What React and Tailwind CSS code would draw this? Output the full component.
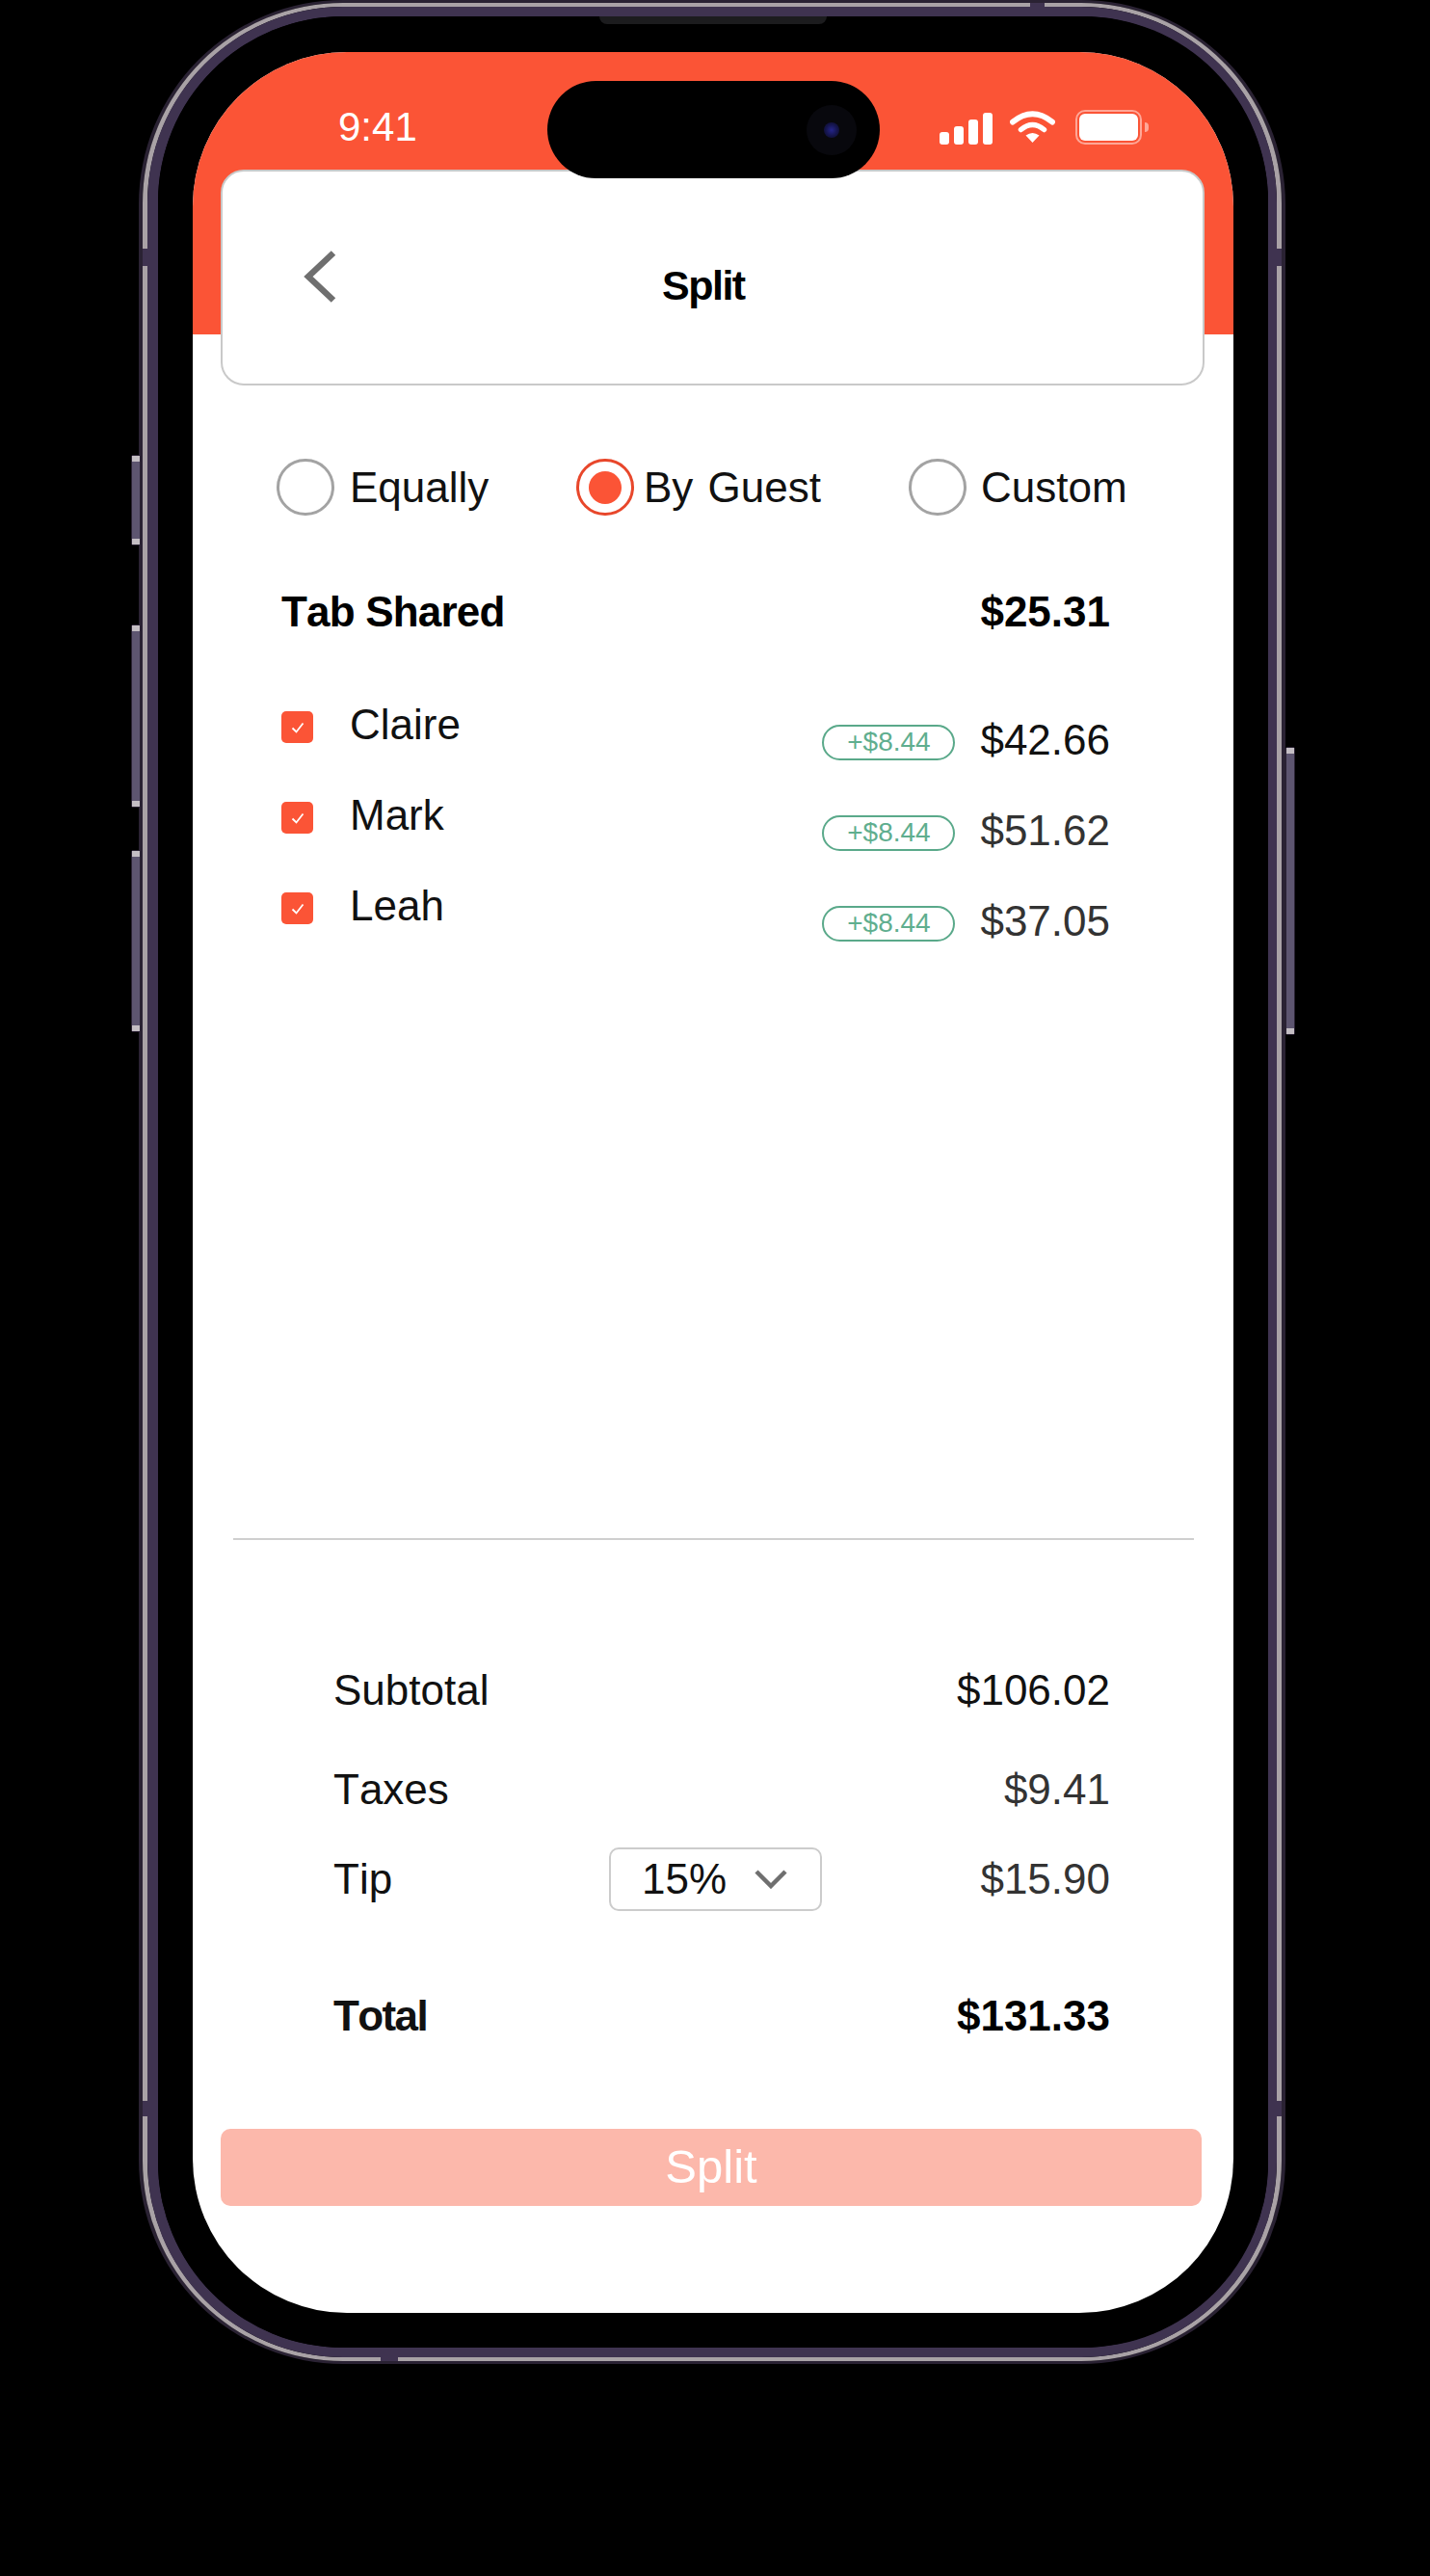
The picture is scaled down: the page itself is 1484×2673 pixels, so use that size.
const guests = [
  { name: "Claire", amount: "$42.66", color: "text-[#111111]" },
  { name: "Mark", amount: "$51.62", color: "text-[#333333]" },
  { name: "Leah", amount: "$37.05", color: "text-[#333333]" },
];

function Signal() {
  return (
    <svg width="55" height="33" viewBox="0 0 55 33" className="mt-[3px]">
      <rect x="0" y="20" width="10" height="13" rx="3" fill="#fff" />
      <rect x="15" y="14" width="10" height="19" rx="3" fill="#fff" />
      <rect x="30" y="7" width="10" height="26" rx="3" fill="#fff" />
      <rect x="45" y="0" width="10" height="33" rx="3" fill="#fff" />
    </svg>
  );
}

function Wifi() {
  return (
    <svg width="47" height="33" viewBox="0 0 47 33" className="mt-[1px] ml-[18px]" fill="none">
      <path d="M3 11.5 Q23.5 -5 44 11.5" stroke="#fff" strokeWidth="6" strokeLinecap="round" />
      <path d="M11.5 19.5 Q23.5 9.5 35.5 19.5" stroke="#fff" strokeWidth="5.5" strokeLinecap="round" />
      <path d="M16.5 25.5 Q23.5 20.5 30.5 25.5 L23.5 33 Z" fill="#fff" />
    </svg>
  );
}

function Battery() {
  return (
    <div className="ml-[21px] flex items-center gap-[3px]">
      <div className="flex h-[36px] w-[69px] rounded-[10px] border-[2.5px] border-[#ffa797] p-[2px]">
        <div className="flex-1 rounded-[6px] bg-white" />
      </div>
      <div className="h-[10px] w-[4px] rounded-r-full bg-[#ffa797]" />
    </div>
  );
}

function Radio({ label, active, width, gap }) {
  return (
    <div className={["flex shrink-0 items-center", width, gap].join(" ")}>
      <div
        className={[
          "flex h-[59px] w-[60px] shrink-0 items-center justify-center rounded-full border-[3px]",
          active ? "border-[#e8472b]" : "border-[#a3a3a3]",
        ].join(" ")}
      >
        {active && <div className="h-[34px] w-[34px] rounded-full bg-[#fb5436]" />}
      </div>
      <span className="leading-[50px] [word-spacing:3px]">{label}</span>
    </div>
  );
}

function GuestRow({ guest }) {
  return (
    <div className="flex h-[94px] justify-between">
      <div className="flex h-[50px] items-center">
        <div className="mt-[5px] flex h-[33px] w-[33px] items-center justify-center rounded-[5px] bg-[#fb5436]">
          <svg width="18" height="18" viewBox="0 0 18 18" fill="none">
            <path d="M3.5 9.5 L7.5 13.5 L14.5 4.5" stroke="#fff" strokeWidth="1.8" />
          </svg>
        </div>
        <span className="ml-[38px] leading-[50px] text-[#111111]">{guest.name}</span>
      </div>
      <div className="mt-[16px] flex h-[50px] items-center">
        <div className="mt-[4px] flex h-[37px] w-[138px] items-center justify-center rounded-full border-[2.5px] border-[#5aa98a] text-[28px] text-[#5fae8f]">
          +$8.44
        </div>
        <span className={["ml-[26px] leading-[50px]", guest.color].join(" ")}>{guest.amount}</span>
      </div>
    </div>
  );
}

function SummaryRow({ label, value, bold, valueColor = "text-[#111111]", className = "", children }) {
  return (
    <div
      className={[
        "flex h-[50px] items-center leading-[50px]",
        bold ? "font-bold" : "",
        className,
      ].join(" ")}
    >
      <span className={["w-[286px]", bold ? "tracking-[-1.6px]" : ""].join(" ")}>{label}</span>
      {children}
      <span className={["ml-auto", valueColor].join(" ")}>{value}</span>
    </div>
  );
}

function SideButton({ className }) {
  return (
    <div
      className={[
        "absolute flex w-[10px] flex-col justify-between rounded-[2px] border border-[#2a2233] bg-[#5d5570]",
        className,
      ].join(" ")}
    >
      <div className="h-[6px] bg-[#c4bec4]" />
      <div className="h-[6px] bg-[#c4bec4]" />
    </div>
  );
}

export default function App() {
  return (
    <div className="h-[2673px] w-full bg-black pl-[144px] font-['Liberation_Sans',sans-serif] text-[44px] text-[#111111] [font-kerning:none]">
      <div className="relative h-[2453px] w-[1190px]">
        <SideButton className="top-[472px] -left-[8px] h-[94px]" />
        <SideButton className="top-[648px] -left-[8px] h-[190px]" />
        <SideButton className="top-[882px] -left-[8px] h-[189px]" />
        <SideButton className="top-[775px] -right-[10px] h-[299px]" />

        {/* outer edge, highlight, purple band */}
        <div className="h-full rounded-[212px] border-x-[4px] border-y-[3px] border-[#2a2233]">
          <div className="h-full rounded-[208px] border-x-[5px] border-y-[4px] border-[#a9a2a6]">
            <div className="h-full rounded-[203px] border-y-[10px] border-r-[9px] border-l-[11px] border-[#3f3350]">
              <div className="relative h-full rounded-[192px] bg-black px-[36px] pt-[37px] pb-[36px]">
                <div className="absolute top-0 left-[458px] h-[8px] w-[236px] rounded-b-[8px] bg-[#1c1c1e]" />

                <div className="flex h-full flex-col overflow-hidden rounded-[160px] bg-white">
                  <div className="flex h-[293px] shrink-0 items-start bg-[#fb5436] pt-[54px] pr-[88px] pl-[151px] text-white">
                    <span className="text-[42px] leading-[48px]">9:41</span>
                    <div className="mt-[6px] ml-auto flex items-start">
                      <Signal />
                      <Wifi />
                      <Battery />
                    </div>
                  </div>

                  <div className="relative -mt-[171px] mr-[30px] ml-[29px] flex h-[224px] shrink-0 items-center rounded-[24px] border-2 border-[#c9c9c9] bg-white pl-[84px]">
                    <svg width="34" height="54" viewBox="0 0 34 54" fill="none" className="-mt-[2px]">
                      <path d="M31 2.5 L5 27 L31 51.5" stroke="#6f6f6f" strokeWidth="6.5" />
                    </svg>
                    <span className="mt-[16px] ml-[338px] text-[43px] font-bold tracking-[-1.5px] text-black">Split</span>
                  </div>

                  <div className="mt-[76px] flex pl-[87px]">
                    <Radio label="Equally" width="w-[311px]" gap="gap-[16px]" />
                    <Radio label="By Guest" active width="w-[345px]" gap="gap-[10px]" />
                    <Radio label="Custom" width="w-[240px]" gap="gap-[15px]" />
                  </div>

                  <div className="mt-[75px] flex h-[50px] items-center justify-between pr-[128px] pl-[92px] leading-[50px] font-bold text-black">
                    <span className="tracking-[-0.8px]">Tab Shared</span>
                    <span>$25.31</span>
                  </div>

                  <div className="mt-[67px] pr-[128px] pl-[92px]">
                    {guests.map((g) => (
                      <GuestRow key={g.name} guest={g} />
                    ))}
                  </div>

                  <div className="mt-[587px] mr-[41px] ml-[42px] h-[2px] shrink-0 bg-[#cfcfcf]" />

                  <div className="mt-[131px] pr-[128px] pl-[146px]">
                    <SummaryRow label="Subtotal" value="$106.02" />
                    <SummaryRow label="Taxes" value="$9.41" valueColor="text-[#333333]" className="mt-[53px]" />
                    <SummaryRow label="Tip" value="$15.90" valueColor="text-[#333333]" className="mt-[43px]">
                      <div className="flex h-[66px] w-[221px] items-center rounded-[10px] border-2 border-[#cccccc] pl-[32px] text-[#111111]">
                        15%
                        <svg width="34" height="20" viewBox="0 0 34 20" fill="none" className="ml-[29px]">
                          <path d="M2 2 L17 17 L32 2" stroke="#6f6f6f" strokeWidth="4.5" />
                        </svg>
                      </div>
                    </SummaryRow>
                    <SummaryRow label="Total" value="$131.33" bold valueColor="text-black" className="mt-[92px]" />
                  </div>

                  <button className="mt-[92px] ml-[29px] flex h-[80px] w-[1018px] shrink-0 items-center justify-center rounded-[10px] bg-[#fcb8ab] text-[49px] text-white">
                    Split
                  </button>
                </div>

                {/* dynamic island */}
                <div className="absolute top-[67px] left-[404px] flex h-[101px] w-[345px] items-center justify-end rounded-full bg-black pr-[24px]">
                  <div className="flex h-[52px] w-[52px] items-center justify-center rounded-full bg-[#08080d]">
                    <div className="h-[16px] w-[16px] rounded-full bg-[radial-gradient(circle,#25258a_0%,#14144a_55%,#0b0b20_100%)]" />
                  </div>
                </div>
              </div>
            </div>
          </div>
        </div>

        {/* antenna bands */}
        <div className="absolute top-[3px] left-[925px] h-[4px] w-[15px] bg-[#3f3350]" />
        <div className="absolute top-[258px] left-[4px] h-[18px] w-[5px] bg-[#3f3350]" />
        <div className="absolute top-[258px] right-[4px] h-[18px] w-[5px] bg-[#3f3350]" />
        <div className="absolute top-[2180px] left-[4px] h-[16px] w-[5px] bg-[#3f3350]" />
        <div className="absolute top-[2180px] right-[4px] h-[16px] w-[5px] bg-[#3f3350]" />
        <div className="absolute bottom-[3px] left-[251px] h-[4px] w-[18px] bg-[#3f3350]" />
      </div>
    </div>
  );
}
